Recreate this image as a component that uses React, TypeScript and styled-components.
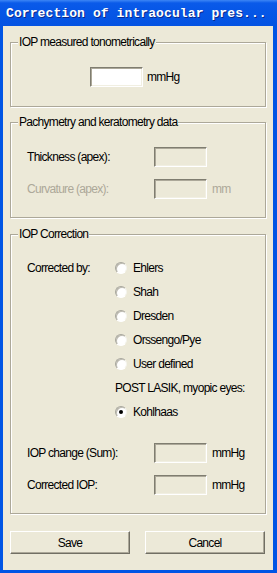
import React from "react";
import styled, { createGlobalStyle } from "styled-components";

const Global = createGlobalStyle`
  html, body { margin: 0; padding: 0; background: #ece9d8; }
  body { font-family: "Liberation Sans Narrow", "Liberation Sans", Arial, sans-serif; }
`;

const Window = styled.div`
  width: 277px;
  height: 573px;
  display: flex;
  flex-direction: column;
  background: #0055e5;
  box-sizing: border-box;
`;

const TitleBar = styled.div`
  height: 26px;
  flex: none;
  display: flex;
  align-items: center;
  padding-left: 6px;
  background: linear-gradient(#3d86f5 0px, #0a5ae9 3px, #0556e6 50%, #0453e2 100%);
  color: #fff;
  font-family: "Liberation Mono", "Courier New", monospace;
  font-weight: bold;
  font-size: 13px;
  letter-spacing: 0.1px;
  white-space: nowrap;
  text-shadow: 1px 1px 0 #0b2a8c;
`;

const Frame = styled.div`
  flex: 1;
  display: flex;
  padding: 0 4px 3px 3px;
  background: #0055e5;
`;

const Content = styled.div`
  flex: 1;
  background: #ece9d8;
  padding: 16px 7px 0 7px;
  display: flex;
  flex-direction: column;
  font-size: 12px;
  letter-spacing: -0.7px;
  color: #000;
`;

const Group = styled.div<{ $h: number; $pt: number; $mt?: number }>`
  position: relative;
  box-sizing: border-box;
  height: ${(p) => p.$h}px;
  margin-top: ${(p) => p.$mt ?? 0}px;
  padding-top: ${(p) => p.$pt}px;
  border: 1px solid #aca899;
  box-shadow: 1px 1px 0 #fff, inset 1px 1px 0 #fff;
  display: flex;
  flex-direction: column;
`;

const Legend = styled.span`
  position: absolute;
  top: -8px;
  left: 7px;
  padding: 0 1px;
  background: #ece9d8;
  line-height: 14px;
  font-size: 12px;
`;

const CenterRow = styled.div`
  display: flex;
  align-items: center;
  padding-left: 79px;
  gap: 4px;
`;

const TextBox = styled.div<{ $disabled?: boolean }>`
  box-sizing: border-box;
  width: 53px;
  height: 20px;
  border-style: solid;
  border-width: 1px;
  border-color: #7f7d70 #fff #fff #7f7d70;
  box-shadow: inset 1px 1px 0 #aca899, inset -1px -1px 0 #f1efe2;
  background: ${(p) => (p.$disabled ? "#ece9d8" : "#fff")};
`;

const FieldRow = styled.div<{ $mt?: number }>`
  display: grid;
  grid-template-columns: 127px 53px auto;
  align-items: center;
  padding-left: 16px;
  margin-top: ${(p) => p.$mt ?? 0}px;
`;

const Label = styled.span<{ $disabled?: boolean }>`
  color: ${(p) => (p.$disabled ? "#aca899" : "#000")};
  white-space: nowrap;
`;

const Unit = styled.span<{ $disabled?: boolean }>`
  padding-left: 5px;
  color: ${(p) => (p.$disabled ? "#aca899" : "#000")};
`;

const OptionsArea = styled.div`
  display: grid;
  grid-template-columns: 88px auto;
  padding-left: 16px;
`;

const OptionsLabel = styled.div`
  height: 24px;
  display: flex;
  align-items: center;
`;

const OptionList = styled.div`
  display: flex;
  flex-direction: column;
`;

const OptionRow = styled.div`
  height: 24px;
  display: flex;
  align-items: center;
  gap: 6px;
`;

const SubHeading = styled.div`
  height: 24px;
  display: flex;
  align-items: center;
`;

const Radio = styled.span<{ $checked?: boolean }>`
  box-sizing: border-box;
  width: 12px;
  height: 12px;
  border-radius: 50%;
  background: #fff;
  border: 1px solid;
  border-color: #a7a69c #f5f4ee #fff #a7a69c;
  box-shadow: inset 1px 1px 0 #bdbab0;
  flex: none;
  display: flex;
  align-items: center;
  justify-content: center;
  &::after {
    content: "";
    display: ${(p) => (p.$checked ? "block" : "none")};
    width: 4px;
    height: 4px;
    border-radius: 50%;
    background: #000;
  }
`;

const ButtonRow = styled.div`
  display: grid;
  grid-template-columns: 120px 120px;
  justify-content: space-between;
  margin-top: 17px;
  padding-right: 1px;
`;

const Button = styled.button`
  box-sizing: border-box;
  height: 23px;
  background: #ece9d8;
  border: 0;
  border-top: 1px solid #fff;
  border-left: 1px solid #fff;
  border-right: 1px solid #716f64;
  border-bottom: 1px solid #716f64;
  box-shadow: inset -1px -1px 0 #aca899;
  font-family: inherit;
  font-size: 12px;
  letter-spacing: inherit;
  color: #000;
  padding: 0;
`;

const options = ["Ehlers", "Shah", "Dresden", "Orssengo/Pye", "User defined"];

export default function App() {
  return (
    <>
      <Global />
      <Window>
        <TitleBar>Correction of intraocular pres...</TitleBar>
        <Frame>
          <Content>
            <Group $h={65} $pt={24}>
              <Legend>IOP measured tonometrically</Legend>
              <CenterRow>
                <TextBox />
                <span>mmHg</span>
              </CenterRow>
            </Group>

            <Group $h={96} $pt={24} $mt={15}>
              <Legend>Pachymetry and keratometry data</Legend>
              <FieldRow>
                <Label>Thickness (apex):</Label>
                <TextBox $disabled />
                <span />
              </FieldRow>
              <FieldRow $mt={12}>
                <Label $disabled>Curvature (apex):</Label>
                <TextBox $disabled />
                <Unit $disabled>mm</Unit>
              </FieldRow>
            </Group>

            <Group $h={280} $pt={21} $mt={16}>
              <Legend>IOP Correction</Legend>
              <OptionsArea>
                <OptionsLabel>Corrected by:</OptionsLabel>
                <OptionList>
                  {options.map((o) => (
                    <OptionRow key={o}>
                      <Radio />
                      <span>{o}</span>
                    </OptionRow>
                  ))}
                  <SubHeading>POST LASIK, myopic eyes:</SubHeading>
                  <OptionRow>
                    <Radio $checked />
                    <span>Kohlhaas</span>
                  </OptionRow>
                </OptionList>
              </OptionsArea>
              <FieldRow $mt={19}>
                <Label>IOP change (Sum):</Label>
                <TextBox $disabled />
                <Unit>mmHg</Unit>
              </FieldRow>
              <FieldRow $mt={12}>
                <Label>Corrected IOP:</Label>
                <TextBox $disabled />
                <Unit>mmHg</Unit>
              </FieldRow>
            </Group>

            <ButtonRow>
              <Button>Save</Button>
              <Button>Cancel</Button>
            </ButtonRow>
          </Content>
        </Frame>
      </Window>
    </>
  );
}
